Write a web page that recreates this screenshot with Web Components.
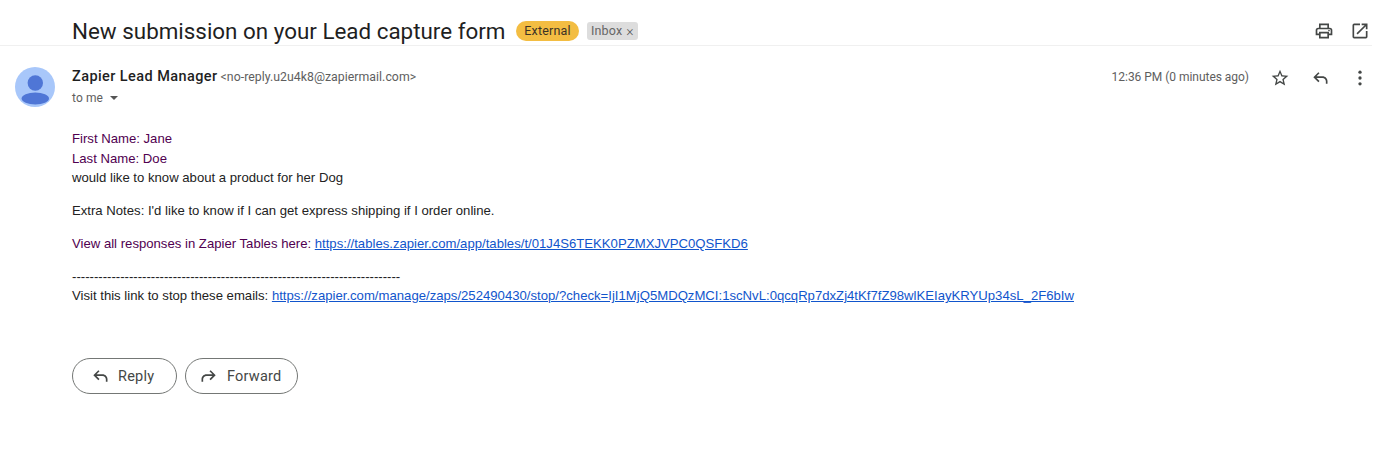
<!DOCTYPE html>
<html lang="en"><head><meta charset="utf-8"><title>Email</title>
<style>
html,body{margin:0;padding:0;background:#fff;height:457px;overflow:hidden}
body{font-family:Roboto,"Liberation Sans",sans-serif;width:1372px}
</style></head><body>
<mail-view>
  <subject-bar>New submission on your Lead capture form</subject-bar>
  <message-head></message-head>
  <message-body></message-body>
  <reply-actions></reply-actions>
</mail-view>
<script>
const ICONS={
 print:'<path d="M19 8h-1V3H6v5H5a3 3 0 0 0-3 3v6h4v4h12v-4h4v-6a3 3 0 0 0-3-3zM8 5h8v3H8V5zm8 14H8v-4h8v4zm4-4h-2v-2H6v2H4v-4a1 1 0 0 1 1-1h14a1 1 0 0 1 1 1v4z"/><circle cx="18" cy="11.5" r="1"/>',
 open:'<path d="M19 19H5V5h7V3H5a2 2 0 0 0-2 2v14a2 2 0 0 0 2 2h14a2 2 0 0 0 2-2v-7h-2v7zM14 3v2h3.59l-9.83 9.83 1.41 1.41L19 6.41V10h2V3h-7z"/>',
 star:'<path d="M22 9.24l-7.19-.62L12 2 9.19 8.63 2 9.24l5.46 4.73L5.82 21 12 17.27 18.18 21l-1.63-7.03L22 9.24zM12 15.4l-3.76 2.27 1-4.28-3.32-2.88 4.38-.38L12 6.1l1.71 4.04 4.38.38-3.32 2.88 1 4.28L12 15.4z"/>',
 reply:'<path d="M21 19h-2v-3c0-2.2-1.8-4-4-4H7.83l3.58 3.59L10 17l-6-6 6-6 1.41 1.41L7.83 10H15c3.31 0 6 2.69 6 6v3z"/>',
 forward:'<path d="M3 19h2v-3c0-2.2 1.8-4 4-4h7.17l-3.58 3.59L14 17l6-6-6-6-1.41 1.41L16.17 10H9c-3.31 0-6 2.69-6 6v3z"/>',
 more:'<circle cx="12" cy="5" r="2"/><circle cx="12" cy="12" r="2"/><circle cx="12" cy="19" r="2"/>'
};
function def(name,css,html,setup){
  customElements.define(name,class extends HTMLElement{
    constructor(){super();const r=this.attachShadow({mode:'open'});r.innerHTML='<style>'+css+'</style>'+(typeof html==='function'?html(this):html);}
    connectedCallback(){if(setup)setup(this);}
  });
}
def('g-icon',':host{display:inline-flex;color:#444746}svg{width:var(--s,20px);height:var(--s,20px);fill:currentColor;display:block}',
  '<svg viewBox="0 0 24 24"></svg>',
  el=>{el.shadowRoot.querySelector('svg').innerHTML=ICONS[el.getAttribute('name')]||'';});
def('mail-view',':host{display:block;width:1372px}','<slot></slot>');
def('mail-label',`:host{display:inline-flex;align-items:center;box-sizing:border-box;font-size:12.5px;white-space:nowrap}
  :host([kind=external]){background:#f3bd42;color:#3c3326;height:20px;width:63px;justify-content:center;border-radius:10px;margin-right:8px;letter-spacing:.2px}
  :host([kind=inbox]){background:#dddddd;color:#666;height:18px;width:51px;padding:0 4px;border-radius:3px;gap:4px;letter-spacing:.15px}
  span{display:none;font-size:14px;color:#555;line-height:1;font-weight:300}
  :host([kind=inbox]) span{display:inline}`,
  '<slot></slot><span>×</span>');
def('subject-bar',`:host{display:flex;align-items:center;height:30px;border-bottom:1px solid #f0f0f0;padding:16px 0 0 72px;box-sizing:content-box;height:29px}
  .t{font-size:22.4px;color:#1f1f1f;font-family:"Roboto",sans-serif;margin-right:11px;white-space:nowrap;width:433px}
  .r{margin-left:auto;display:flex;gap:16px;margin-right:2px;--s:20px}`,
  `<div class="t"><slot></slot></div><mail-label kind="external">External</mail-label><mail-label kind="inbox">Inbox</mail-label>
   <div class="r"><g-icon name="print"></g-icon><g-icon name="open"></g-icon></div>`);
def('message-head',`:host{display:grid;grid-template-columns:72px 1fr auto;height:65px;font-size:12.5px}
  .av{padding:21px 0 0 15px}
  svg{display:block;width:40px;height:40px}
  .who{padding-top:21px}
  .l1{display:flex;align-items:baseline;height:20px;line-height:20px;white-space:nowrap}
  b{font-size:14.5px;font-weight:500;color:#1f1f1f;letter-spacing:.42px;margin-right:3px}
  .mail{font-size:12.3px;color:#5e5e5e;letter-spacing:.03px}
  .l2{display:flex;align-items:center;height:20px;margin-top:1px;color:#5e5e5e;font-size:12px;letter-spacing:.1px;gap:7px}
  .tri{width:0;height:0;border:4px solid transparent;border-top:4.5px solid #555;border-bottom:0}
  .right{display:flex;align-items:flex-start;padding-top:20px;padding-right:2px}
  .time{font-size:12px;color:#5e5e5e;line-height:22px;letter-spacing:-.03px;margin-right:21px}
  .ic{display:flex;gap:20px;padding-top:2px}`,
  `<div class="av"><svg viewBox="0 0 40 40"><circle cx="20" cy="20" r="20" fill="#a8c7fa"/><circle cx="20.3" cy="16" r="7.7" fill="#4f76d6"/><ellipse cx="20.3" cy="31.5" rx="13.7" ry="5.9" fill="#4f76d6"/></svg></div>
   <div class="who"><div class="l1"><b>Zapier Lead Manager</b><span class="mail">&lt;no-reply.u2u4k8@zapiermail.com&gt;</span></div>
   <div class="l2"><span>to me</span><span class="tri"></span></div></div>
   <div class="right"><span class="time">12:36 PM (0 minutes ago)</span><div class="ic"><g-icon name="star"></g-icon><g-icon name="reply"></g-icon><g-icon name="more"></g-icon></div></div>`);
def('message-body',`:host{display:block;padding:18px 0 0 72px;font-family:"Liberation Sans",Arial,sans-serif;font-size:13.15px;line-height:20px;color:#222;white-space:nowrap}
  .p{color:#500050}
  p{margin:0}
  .n{line-height:19px}
  .g{height:13px}
  a{color:#1155cc;text-decoration:underline}`,
  `<p class="p">First Name: Jane</p><p class="p n">Last Name: Doe</p><p>would like to know about a product for her Dog</p>
   <div class="g"></div>
   <p>Extra Notes: I'd like to know if I can get express shipping if I order online.</p>
   <div class="g"></div>
   <p class="p">View all responses in Zapier Tables here: <a href="#">https://tables.zapier.com/app/tables/t/01J4S6TEKK0PZMXJVPC0QSFKD6</a></p>
   <div class="g"></div>
   <p class="n">---------------------------------------------------------------------------</p>
   <p>Visit this link to stop these emails: <a href="#">https://zapier.com/manage/zaps/252490430/stop/?check=IjI1MjQ5MDQzMCI:1scNvL:0qcqRp7dxZj4tKf7fZ98wlKEIayKRYUp34sL_2F6bIw</a></p>`);
def('pill-button',`:host{display:inline-flex;align-items:center;box-sizing:border-box;height:36px;border:1px solid #747775;border-radius:18px;font-size:14.5px;color:#444746;letter-spacing:.22px;--s:20px}
  g-icon{margin-right:8px}`,
  el=>`<g-icon name="${el.getAttribute('icon')}"></g-icon><slot></slot>`);
def('reply-actions',`:host{display:flex;gap:8px;padding:52px 0 0 72px}
  pill-button[icon=reply]{width:105px;padding-left:17px}
  pill-button[icon=forward]{width:113px;padding-left:13px}`,
  `<pill-button icon="reply">Reply</pill-button><pill-button icon="forward">Forward</pill-button>`);
</script>
</body></html>
